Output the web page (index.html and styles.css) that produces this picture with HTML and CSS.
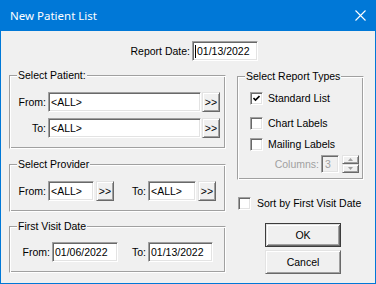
FILE: index.html
```html
<!DOCTYPE html>
<html lang="en">
<head>
  <meta charset="UTF-8" />
  <title>New Patient List</title>
  <link rel="stylesheet" href="styles.css">
</head>
<body>
  <div class="window">
    <div class="titlebar">
      <span class="title">New Patient List</span>
      <svg class="close" width="11" height="11" viewBox="0 0 11 11">
        <path d="M0.5 0.5 L10.5 10.5 M10.5 0.5 L0.5 10.5" stroke="#fff" stroke-width="1.1" fill="none"/>
      </svg>
    </div>

    <div class="content">
      <div class="report-date">
        <label class="lbl">Report Date:</label>
        <span class="field date-main"><span class="caret"></span>01/13/2022</span>
      </div>

      <div class="main">
        <div class="left">
          <div class="group patient">
            <span class="legend">Select Patient:</span>
            <div class="row">
              <label class="lbl">From:</label>
              <span class="field">&lt;ALL&gt;</span>
              <button class="btn pick">&gt;&gt;</button>
            </div>
            <div class="row">
              <label class="lbl">To:</label>
              <span class="field">&lt;ALL&gt;</span>
              <button class="btn pick">&gt;&gt;</button>
            </div>
          </div>

          <div class="group provider">
            <span class="legend">Select Provider</span>
            <div class="row">
              <label class="lbl">From:</label>
              <span class="field">&lt;ALL&gt;</span>
              <button class="btn pick">&gt;&gt;</button>
              <label class="lbl lbl-to">To:</label>
              <span class="field">&lt;ALL&gt;</span>
              <button class="btn pick">&gt;&gt;</button>
            </div>
          </div>

          <div class="group visit">
            <span class="legend">First Visit Date</span>
            <div class="row">
              <label class="lbl">From:</label>
              <span class="field">01/06/2022</span>
              <label class="lbl lbl-to">To:</label>
              <span class="field">01/13/2022</span>
            </div>
          </div>
        </div>

        <div class="right">
          <div class="group types">
            <span class="legend">Select Report Types</span>
            <div class="check-row standard">
              <span class="check">
                <svg width="7" height="7" viewBox="0 0 7 7">
                  <path d="M0.5 3 L2.5 5 L6.5 1" stroke="#000" stroke-width="1.6" fill="none"/>
                </svg>
              </span>
              <span>Standard List</span>
            </div>
            <div class="check-row chart">
              <span class="check"></span>
              <span>Chart Labels</span>
            </div>
            <div class="check-row mailing">
              <span class="check"></span>
              <span>Mailing Labels</span>
            </div>
            <div class="columns-row">
              <label class="disabled">Columns:</label>
              <span class="field small">3</span>
              <span class="spin">
                <span class="btn spin-btn">
                  <svg width="5" height="3" viewBox="0 0 5 3"><path d="M2.5 0 L5 3 L0 3 Z" fill="#a0a0a0"/></svg>
                </span>
                <span class="btn spin-btn">
                  <svg width="5" height="3" viewBox="0 0 5 3"><path d="M0 0 L5 0 L2.5 3 Z" fill="#a0a0a0"/></svg>
                </span>
              </span>
            </div>
          </div>

          <div class="check-row sort">
            <span class="check"></span>
            <span>Sort by First Visit Date</span>
          </div>

          <button class="btn action default">OK</button>
          <button class="btn action">Cancel</button>
        </div>
      </div>
    </div>
  </div>
</body>
</html>
```

FILE: styles.css
```css
* {
  margin: 0;
  padding: 0;
  box-sizing: border-box;
}

body {
  width: 376px;
  height: 284px;
  overflow: hidden;
  background: #f0f0f0;
  font-family: "Liberation Sans", Arial, sans-serif;
  font-size: 10.5px;
  line-height: 13px;
  color: #000;
}

.window {
  width: 376px;
  height: 284px;
  border: 1px solid #0078d7;
  border-top: 0;
  background: #f0f0f0;
  display: flex;
  flex-direction: column;
}

.titlebar {
  height: 31px;
  margin: 0 -1px;
  padding: 0 10px 0 10px;
  background: #0078d7;
  color: #fff;
  display: flex;
  align-items: center;
  justify-content: space-between;
}

.title {
  font-family: "Noto Sans", "Liberation Sans", sans-serif;
  font-size: 11.5px;
}

.close {
  display: block;
}

.content {
  flex: 1;
}

/* sunken edit box */
.field {
  height: 20px;
  background: #fff;
  border: 1px solid;
  border-color: #a0a0a0 #fff #fff #a0a0a0;
  box-shadow: inset 1px 1px #696969, inset -1px -1px #e3e3e3;
  padding: 0 2px;
  display: flex;
  align-items: center;
  white-space: nowrap;
  overflow: hidden;
}

.caret {
  width: 1px;
  height: 13px;
  background: #000;
  margin-right: 1px;
}

.btn {
  background: #f0f0f0;
  border: 1px solid;
  border-color: #e3e3e3 #696969 #696969 #e3e3e3;
  box-shadow: inset 1px 1px #fff, inset -1px -1px #a0a0a0;
  font-family: inherit;
  font-size: 10.5px;
  color: #000;
  display: flex;
  align-items: center;
  justify-content: center;
}

.report-date {
  margin-top: 10px;
  height: 20px;
  display: flex;
  align-items: center;
}

.report-date .lbl {
  width: 189px;
  margin-right: 2px;
  text-align: right;
}

.date-main {
  width: 66px;
}

.main {
  display: flex;
}

.left {
  width: 225px;
  padding-left: 8px;
}

.right {
  margin-left: 11px;
  width: 127px;
}

/* etched group box */
.group {
  position: relative;
  border: 1px solid;
  border-color: #a0a0a0 #fff #fff #a0a0a0;
  box-shadow: inset 1px 1px #fff, inset -1px -1px #a0a0a0;
}

.legend {
  position: absolute;
  top: -7px;
  left: 7px;
  padding: 0 1px;
  background: #f0f0f0;
}

.row {
  display: flex;
  align-items: center;
}

.lbl {
  text-align: right;
  margin-right: 2px;
}

.pick {
  width: 18px;
  height: 20px;
}

/* Select Patient */
.patient {
  width: 217px;
  height: 74px;
  margin-top: 14px;
  padding-top: 16px;
}

.patient .row + .row {
  margin-top: 6px;
}

.patient .lbl {
  width: 36px;
}

.patient .field {
  width: 153px;
}

.patient .pick {
  margin-left: 1px;
}

/* Select Provider */
.provider {
  width: 217px;
  height: 48px;
  margin-top: 15px;
  padding-top: 16px;
}

.provider .lbl {
  width: 36px;
}

.provider .field {
  width: 46px;
}

.provider .field + .pick {
  margin-left: 2px;
}

.provider .lbl-to {
  width: 32px;
}

.provider .field:nth-of-type(2) {
  width: 48px;
}

/* First Visit Date */
.visit {
  width: 217px;
  height: 47px;
  margin-top: 14px;
  padding-top: 15px;
}

.visit .lbl {
  width: 40px;
}

.visit .field {
  width: 66px;
}

.visit .lbl-to {
  width: 28px;
}

.visit .field:nth-of-type(2) {
  width: 65px;
}

/* Report types */
.types {
  height: 104px;
  margin-top: 15px;
  padding-top: 15px;
}

.check-row {
  display: flex;
  align-items: center;
  height: 13px;
  white-space: nowrap;
}

.check-row .check {
  margin-right: 5px;
}

.check {
  width: 13px;
  height: 13px;
  flex: none;
  background: #fff;
  border: 1px solid;
  border-color: #a0a0a0 #fff #fff #a0a0a0;
  box-shadow: inset 1px 1px #696969, inset -1px -1px #e3e3e3;
  display: flex;
  align-items: center;
  justify-content: center;
}

.types .check-row {
  padding-left: 12px;
}

.chart {
  margin-top: 12px;
}

.mailing {
  margin-top: 8px;
}

.columns-row {
  margin-top: 4px;
  padding-right: 4px;
  display: flex;
  align-items: center;
  justify-content: flex-end;
}

.disabled {
  color: #a0a0a0;
}

.field.small {
  width: 18px;
  height: 18px;
  margin-left: 2px;
  background: #f0f0f0;
  color: #a0a0a0;
  padding: 0 0 0 3px;
}

.spin {
  width: 17px;
  height: 18px;
  margin-left: 3px;
  display: flex;
  flex-direction: column;
}

.spin-btn {
  height: 9px;
}

.spin-btn svg {
  display: block;
}

.sort {
  margin-top: 17px;
  margin-left: 1px;
}

.sort .check {
  margin-right: 6px;
}

.action {
  width: 76px;
  height: 24px;
  margin-left: 28px;
}

.default {
  margin-top: 13px;
  border: 1px solid #3c3c3c;
  box-shadow: inset 1px 1px #e3e3e3, inset -1px -1px #696969, inset 2px 2px #fff, inset -2px -2px #a0a0a0;
}

.default + .action {
  margin-top: 3px;
}
```
